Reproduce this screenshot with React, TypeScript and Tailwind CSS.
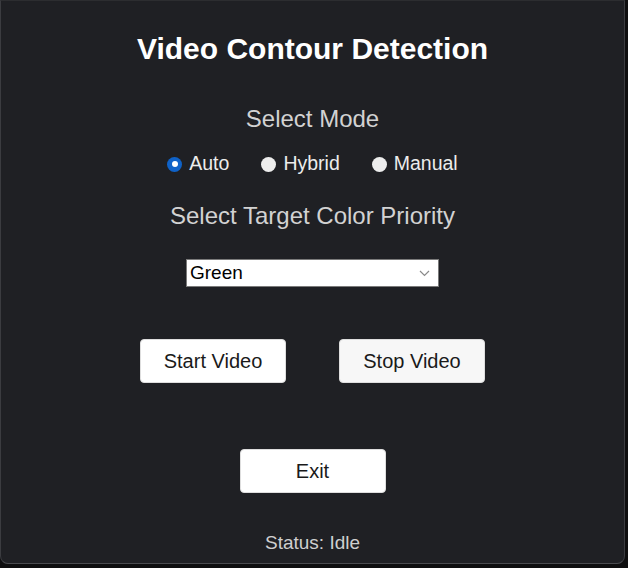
import { useState } from "react";

const modes = ["Auto", "Hybrid", "Manual"];

function Radio({ label, checked, onSelect }: { label: string; checked: boolean; onSelect: () => void }) {
  return (
    <button type="button" onClick={onSelect} className="flex items-center gap-[7px] text-[19.5px] text-[#ececec]">
      {checked ? (
        <span className="flex h-[15px] w-[15px] items-center justify-center rounded-full bg-[#0f62c8]">
          <span className="h-[6px] w-[6px] rounded-full bg-white" />
        </span>
      ) : (
        <span className="h-[15px] w-[15px] rounded-full bg-[#ededed]" />
      )}
      <span>{label}</span>
    </button>
  );
}

function ActionButton({ children, muted }: { children: string; muted?: boolean }) {
  return (
    <button
      type="button"
      className={`flex h-[44px] w-[146px] items-center justify-center rounded-[4px] border border-[#dedede] text-[20px] text-[#1a1a1a] ${
        muted ? "bg-[#f7f7f7]" : "bg-white"
      }`}
    >
      {children}
    </button>
  );
}

export default function App() {
  const [mode, setMode] = useState("Auto");

  return (
    <div className="h-[568px] w-[628px] bg-[#0e0e0f]" style={{ fontFamily: '"Liberation Sans", Arial, sans-serif' }}>
      <div className="flex h-[564px] w-[625px] flex-col items-center rounded-b-[8px] border border-t-[#2c2d30] border-x-[#3b3c40] border-b-[#4a4b4f] bg-[#1f2024] pt-[31px]">
        <h1 className="flex h-[32px] items-center text-[30px] font-bold text-white">Video Contour Detection</h1>

        <div className="mt-[41px] flex h-[28px] items-center text-[24px] text-[#d2d2d2]">Select Mode</div>

        <div className="mt-[19px] flex h-[24px] items-center gap-[32px]">
          {modes.map((m) => (
            <Radio key={m} label={m} checked={mode === m} onSelect={() => setMode(m)} />
          ))}
        </div>

        <div className="mt-[26px] flex h-[28px] items-center text-[24px] text-[#d2d2d2]">Select Target Color Priority</div>

        <div className="mt-[29px] flex h-[28px] w-[253px] items-center justify-between border border-[#7a7a7a] bg-white pl-[3px] pr-[8px] text-[19px] text-black">
          <span>Green</span>
          <svg width="11" height="7" viewBox="0 0 11 7" fill="none">
            <path d="M1 1l4.5 4.5L10 1" stroke="#8a8a8a" strokeWidth="1.2" />
          </svg>
        </div>

        <div className="mt-[52px] flex gap-[53px]">
          <ActionButton>Start Video</ActionButton>
          <ActionButton muted>Stop Video</ActionButton>
        </div>

        <div className="mt-[66px]">
          <ActionButton>Exit</ActionButton>
        </div>

        <div className="mt-[38px] flex h-[24px] items-center text-[19px] text-[#cfcfcf]">Status: Idle</div>
      </div>
    </div>
  );
}
